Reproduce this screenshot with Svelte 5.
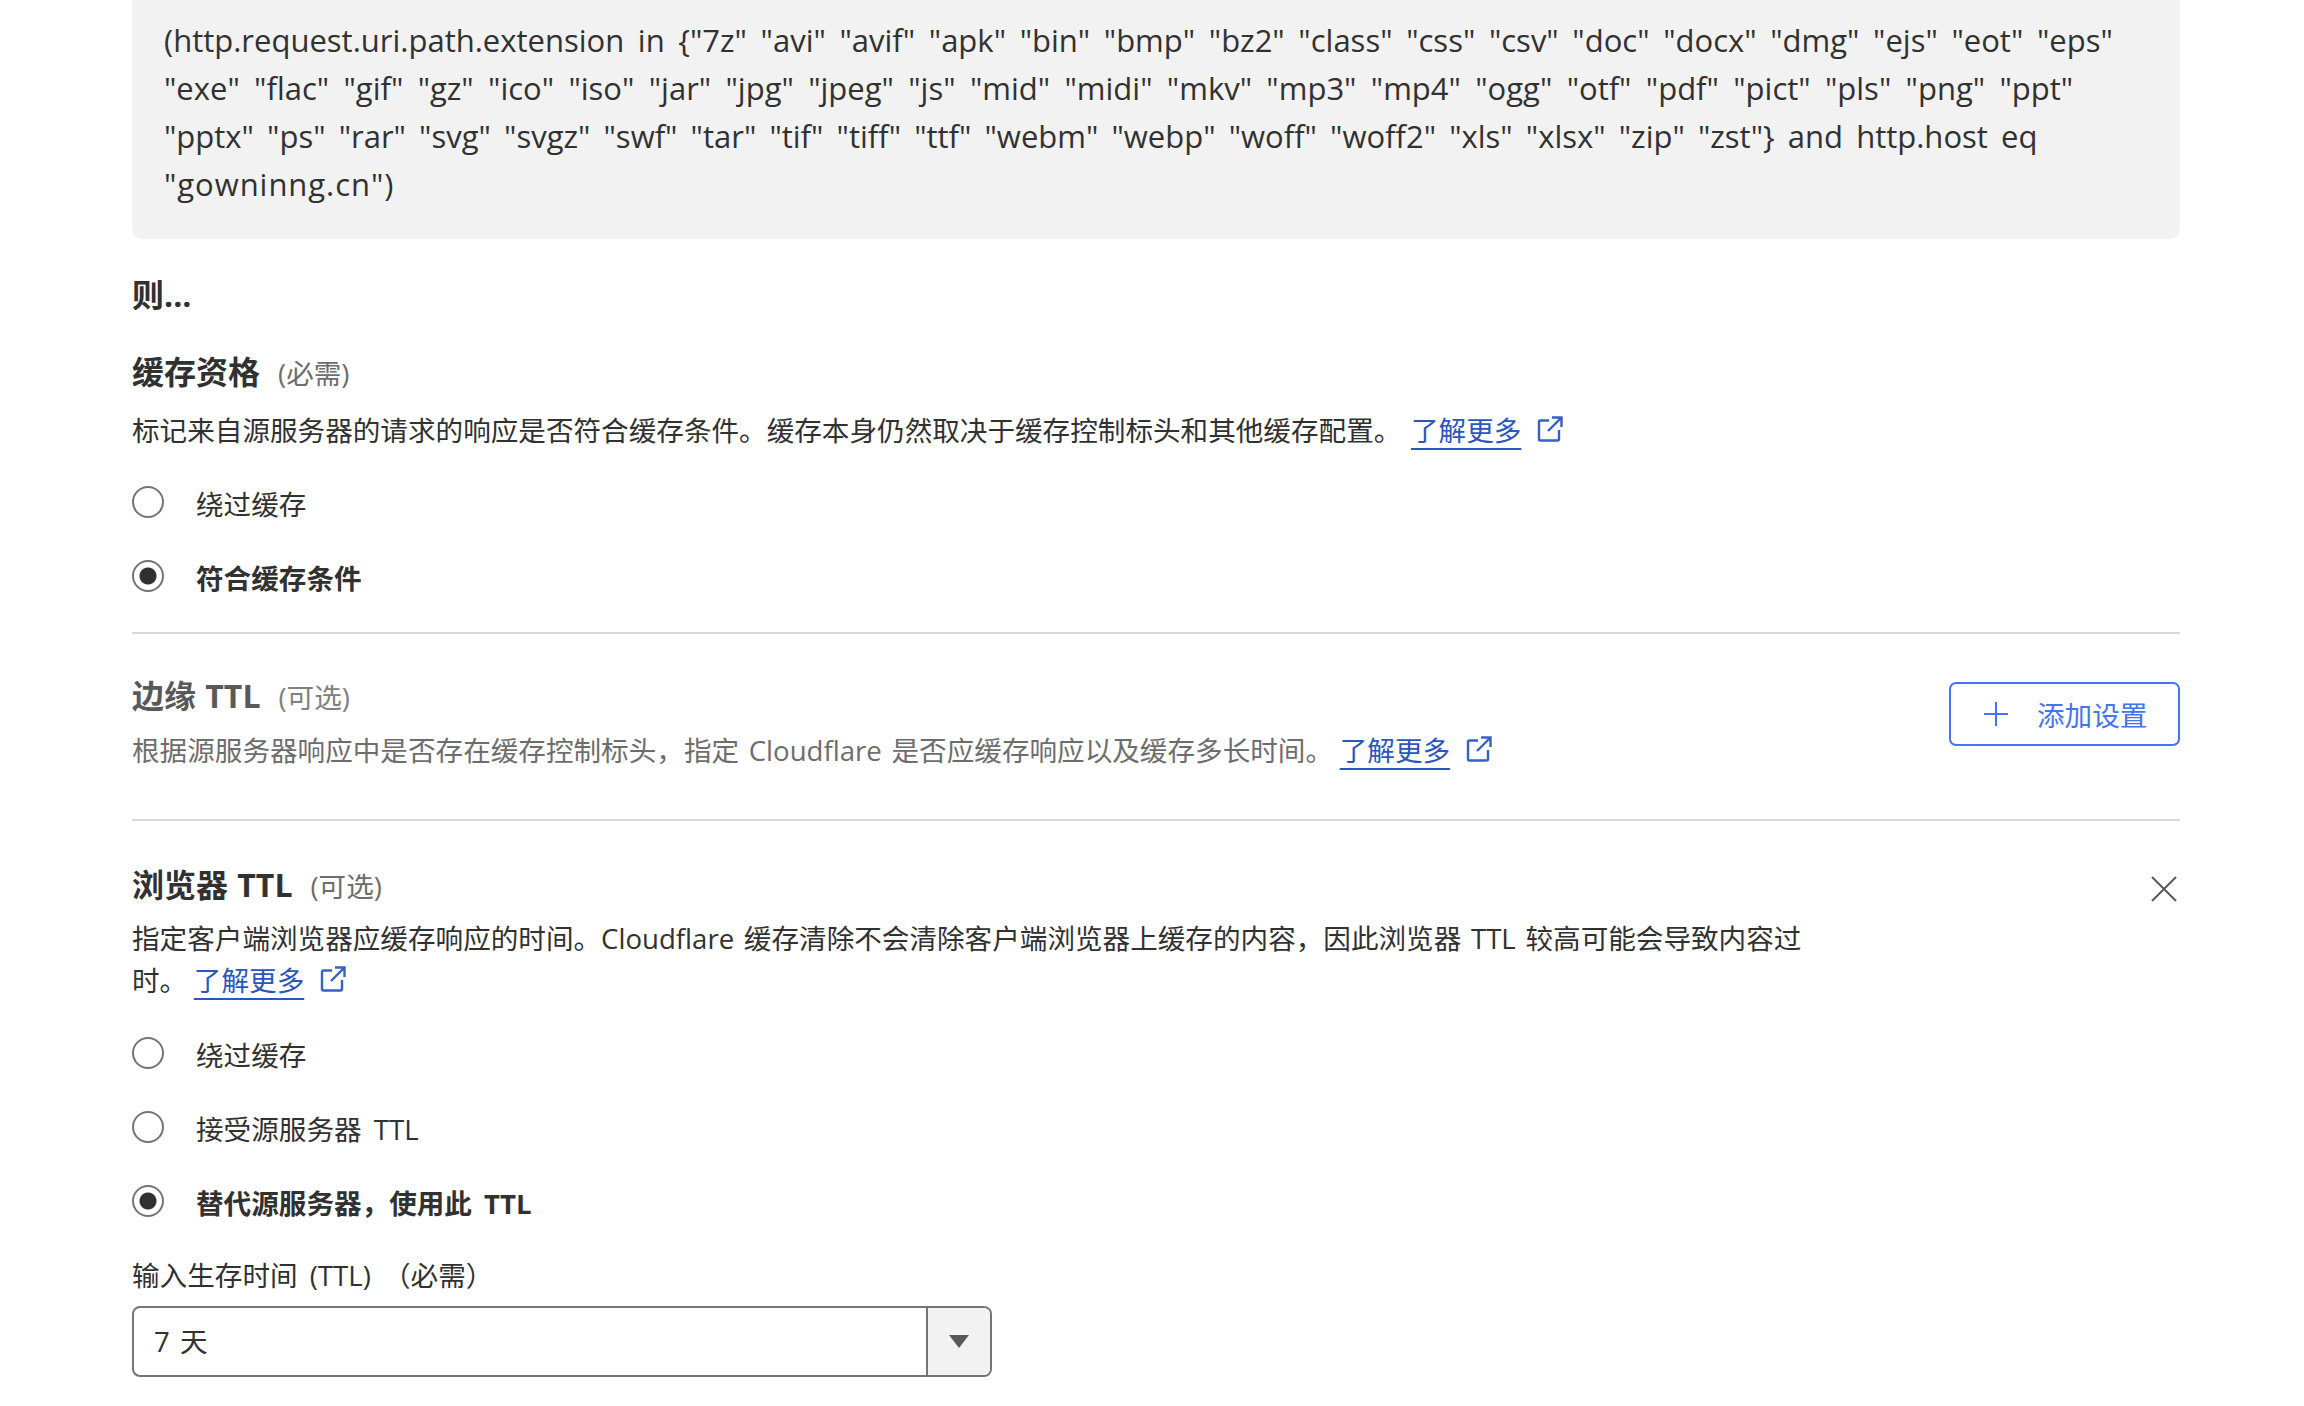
<script lang="ts">
	type Opt = { label: string; checked?: boolean };

	const cacheOpts: Opt[] = [
		{ label: '绕过缓存' },
		{ label: '符合缓存条件', checked: true }
	];
	const browserOpts: Opt[] = [
		{ label: '绕过缓存' },
		{ label: '接受源服务器 TTL' },
		{ label: '替代源服务器，使用此 TTL', checked: true }
	];

	// word/letter spacing per line, the fallback font runs narrower than the original
	const codeLines = [
		{ text: '(http.request.uri.path.extension in {"7z" "avi" "avif" "apk" "bin" "bmp" "bz2" "class" "css" "csv" "doc" "docx" "dmg" "ejs" "eot" "eps"', word: 5.6, letter: 0 },
		{ text: '"exe" "flac" "gif" "gz" "ico" "iso" "jar" "jpg" "jpeg" "js" "mid" "midi" "mkv" "mp3" "mp4" "ogg" "otf" "pdf" "pict" "pls" "png" "ppt"', word: 6.3, letter: 0 },
		{ text: '"pptx" "ps" "rar" "svg" "svgz" "swf" "tar" "tif" "tiff" "ttf" "webm" "webp" "woff" "woff2" "xls" "xlsx" "zip" "zst"} and http.host eq', word: 5.1, letter: 0 },
		{ text: '"gowninng.cn")', word: 0, letter: 0.95 }
	];
</script>

{#snippet learnMore()}
	<a class="more" href="#more">了解更多</a><svg class="ext" viewBox="0 0 26 26" width="26" height="26" fill="none" stroke="currentColor" stroke-width="2.4"><path d="M12 4.5H3.5a1.500 1.500 0 0 0-1.500 1.500v17a1.500 1.500 0 0 0 1.500 1.500h17a1.500 1.500 0 0 0 1.500-1.500v-9" /><path d="M11 15 24.500 1.500M15 1.500h9.500v9.500" /></svg>
{/snippet}

{#snippet radios(opts: Opt[])}
	<div class="radios">
		{#each opts as o}
			<div class="radio-row" class:on={o.checked}>
				<span class="radio"></span>
				<span class="radio-label">{o.label}</span>
			</div>
		{/each}
	</div>
{/snippet}

<main class="page">
	<div class="code">
		{#each codeLines as line}
			<div style="word-spacing: {line.word}px; letter-spacing: {line.letter}px">{line.text}</div>
		{/each}
	</div>

	<h2 class="then">则...</h2>

	<section class="block first">
		<h3>缓存资格<small>(必需)</small></h3>
		<p>标记来自源服务器的请求的响应是否符合缓存条件。缓存本身仍然取决于缓存控制标头和其他缓存配置。 {@render learnMore()}</p>
		{@render radios(cacheOpts)}
	</section>

	<section class="block muted">
		<div class="text">
			<h3>边缘 TTL<small>(可选)</small></h3>
			<p>根据源服务器响应中是否存在缓存控制标头，指定 Cloudflare 是否应缓存响应以及缓存多长时间。 {@render learnMore()}</p>
		</div>
		<button class="add" type="button">
			<svg viewBox="0 0 24 24" width="24" height="24" fill="none" stroke="currentColor" stroke-width="2"><path d="M12 0v24M0 12h24" /></svg>
			添加设置
		</button>
	</section>

	<section class="block browser">
		<svg class="close" viewBox="0 0 26 26" width="26" height="26" fill="none" stroke="#595959" stroke-width="2"><path d="M1 1l24 24M25 1 1 25" /></svg>
		<h3>浏览器 TTL<small>(可选)</small></h3>
		<p class="narrow">指定客户端浏览器应缓存响应的时间。Cloudflare 缓存清除不会清除客户端浏览器上缓存的内容，因此浏览器 TTL 较高可能会导致内容过时。 {@render learnMore()}</p>
		{@render radios(browserOpts)}
		<label class="field-label" for="ttl">输入生存时间 (TTL) （必需）</label>
		<div class="select" id="ttl">
			<span class="value">7 天</span>
			<span class="arrow"></span>
		</div>
	</section>
</main>

<style>
	:global(body) {
		margin: 0;
		background: #fff;
	}

	.page {
		height: 1406px;
		overflow: hidden;
		box-sizing: border-box;
		padding: 0 124px 0 132px;
		color: #313131;
		font-family: "Open Sans", "Noto Sans CJK SC", sans-serif;
		font-size: 27.6px;
	}

	.code {
		height: 239px;
		box-sizing: border-box;
		padding: 16px 32px 0 32px;
		background: #f2f2f2;
		border-radius: 0 0 10px 10px;
		font-size: 31px;
		line-height: 48px;
		white-space: pre;
	}

	.then {
		margin: 37px 0 0;
		font-size: 32px;
		line-height: 38px;
		font-weight: 700;
	}

	h3 {
		margin: 0;
		font-size: 32px;
		line-height: 40px;
		font-weight: 700;
		word-spacing: 1px;
	}

	small {
		margin-left: 18px;
		font-size: 27.6px;
		font-weight: 400;
		color: #6d6d6d;
	}

	p {
		margin: 16px 0 0;
		line-height: 42px;
		word-spacing: 2.5px;
	}

	.block {
		border-bottom: 2px solid #d9d9d9;
	}

	.first {
		margin-top: 38px;
		padding-bottom: 36px;
	}

	.radios {
		margin-top: 31px;
		display: flex;
		flex-direction: column;
		gap: 34px;
	}

	.radio-row {
		display: flex;
		align-items: center;
		gap: 32px;
		height: 40px;
		word-spacing: 5px;
	}

	.radio-label {
		padding-top: 2px;
	}

	.radio-row.on {
		font-weight: 700;
	}

	.radio {
		width: 32px;
		height: 32px;
		box-sizing: border-box;
		border: 2px solid #747474;
		border-radius: 50%;
		background: #fff;
		flex: none;
	}

	.on .radio {
		background: radial-gradient(circle, #313131 0 8px, transparent 9px);
	}

	.more {
		color: #2c56bd;
		text-decoration: underline;
		text-decoration-thickness: 2px;
		text-underline-offset: 7px;
	}

	.ext {
		margin-left: 16px;
		color: #3560c8;
		vertical-align: -1px;
	}

	.muted .more,
	.browser .more {
		margin-left: -3px;
	}

	.muted {
		display: flex;
		justify-content: space-between;
		align-items: flex-start;
		padding: 42px 0 48px;
		color: #6d6d6d;
	}

	.muted h3 {
		color: #595959;
	}

	.muted small {
		color: #808080;
	}

	.muted p {
		margin-top: 12px;
	}

	.browser p {
		margin-top: 11px;
	}

	.add {
		margin-top: 6px;
		width: 231px;
		height: 64px;
		padding: 0 0 0 33px;
		display: flex;
		align-items: center;
		gap: 29px;
		background: #fff;
		border: 2px solid #4474f0;
		border-radius: 7px;
		color: #4474f0;
		font: inherit;
	}

	.browser {
		position: relative;
		border: 0;
		padding-top: 44px;
	}

	.close {
		position: absolute;
		right: 3px;
		top: 55px;
	}

	.narrow {
		max-width: 1690px;
	}

	.browser .radios {
		margin-top: 32px;
	}

	.field-label {
		display: block;
		margin-top: 34px;
		line-height: 40px;
		word-spacing: 5px;
	}

	.select {
		margin-top: 11px;
		width: 860px;
		height: 71px;
		box-sizing: border-box;
		display: flex;
		border: 2px solid #747474;
		border-radius: 8px;
		overflow: hidden;
	}

	.value {
		flex: 1;
		padding-left: 20px;
		line-height: 66px;
		word-spacing: 3px;
	}

	.arrow {
		width: 62px;
		border-left: 2px solid #747474;
		background: #f2f2f2;
		display: flex;
		align-items: center;
		justify-content: center;
	}

	.arrow::after {
		content: "";
		border-left: 10px solid transparent;
		border-right: 10px solid transparent;
		border-top: 13px solid #595959;
	}
</style>
